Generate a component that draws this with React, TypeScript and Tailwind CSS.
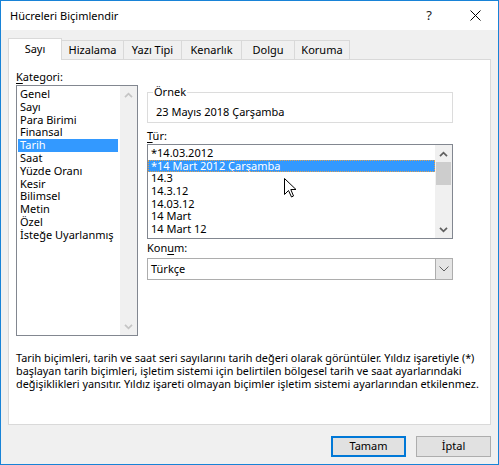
import React from 'react';

const categories = [
  'Genel',
  'Sayı',
  'Para Birimi',
  'Finansal',
  'Tarih',
  'Saat',
  'Yüzde Oranı',
  'Kesir',
  'Bilimsel',
  'Metin',
  'Özel',
  'İsteğe Uyarlanmış',
];

const dateTypes = [
  '*14.03.2012',
  '*14 Mart 2012 Çarşamba',
  '14.3',
  '14.3.12',
  '14.03.12',
  '14 Mart',
  '14 Mart 12',
];

const tabs = [
  { label: 'Sayı', width: 'w-[54px]', active: true },
  { label: 'Hizalama', width: 'w-[62px]', active: false },
  { label: 'Yazı Tipi', width: 'w-[58px]', active: false },
  { label: 'Kenarlık', width: 'w-[60px]', active: false },
  { label: 'Dolgu', width: 'w-[53px]', active: false },
  { label: 'Koruma', width: 'w-[55px]', active: false },
];

const Chevron = ({ dir, color }: { dir: 'up' | 'down'; color: string }) => (
  <svg width="9" height="6" viewBox="0 0 9 6">
    <path
      d={dir === 'up' ? 'M1 5.2 L4.5 1.6 L8 5.2' : 'M1 0.8 L4.5 4.4 L8 0.8'}
      fill="none"
      stroke={color}
      strokeWidth="1.7"
    />
  </svg>
);

const ScrollBar = ({ disabled, thumb }: { disabled?: boolean; thumb?: boolean }) => {
  const color = disabled ? '#c5c5c5' : '#606060';
  return (
    <div className="flex flex-col w-[17px] bg-[#f0f0f0]">
      <div className="h-[17px] flex items-center justify-center">
        <Chevron dir="up" color={color} />
      </div>
      <div className="flex-1">
        {thumb && <div className="mx-[1px] h-[23px] bg-[#cdcdcd]" />}
      </div>
      <div className="h-[17px] flex items-center justify-center">
        <Chevron dir="down" color={color} />
      </div>
    </div>
  );
};

const Cursor = () => (
  <svg
    className="absolute left-[282px] top-[176px]"
    width="14"
    height="22"
    viewBox="0 0 14 22"
  >
    <path
      d="M1.5 1.5 V17.5 L5.5 13.5 L8.5 20 L10.5 19 L7.8 12.5 H13 Z"
      fill="#ffffff"
      stroke="#000000"
      strokeWidth="1"
      strokeLinejoin="miter"
    />
  </svg>
);

const App = () => {
  return (
    <div className="relative w-[499px] h-[465px] flex flex-col bg-[#f0f0f0] border border-[#1883d7] text-[11px] text-black font-['Noto_Sans','Open_Sans',sans-serif] overflow-hidden">
      {/* title bar */}
      <div className="h-[29px] flex items-center bg-white">
        <span className="pl-[9px] leading-[16px] text-[11px]">Hücreleri Biçimlendir</span>
        <div className="ml-auto flex h-full">
          <div className="w-[46px] flex items-center justify-center text-[13px] text-[#222]">?</div>
          <div className="w-[46px] flex items-center justify-center">
            <svg width="11" height="11" viewBox="0 0 11 11">
              <path d="M0.5 0.5 L10.5 10.5 M10.5 0.5 L0.5 10.5" stroke="#000" strokeWidth="1" />
            </svg>
          </div>
        </div>
      </div>

      <div className="flex-1 flex flex-col px-[7px]">
        {/* tabs */}
        <div className="mt-[8px] h-[21px] flex items-end">
          {tabs.map((tab) =>
            tab.active ? (
              <div
                key={tab.label}
                className={`${tab.width} h-[22px] -mb-[1px] relative z-10 flex items-center justify-center bg-white border border-b-0 border-[#d9d9d9]`}
              >
                {tab.label}
              </div>
            ) : (
              <div
                key={tab.label}
                className={`${tab.width} h-[19px] flex items-center justify-center border-t border-r border-[#d9d9d9]`}
              >
                {tab.label}
              </div>
            )
          )}
        </div>

        {/* panel */}
        <div className="w-[483px] h-[366px] flex flex-col bg-white border border-[#d9d9d9] px-[7px] pt-[8px]">
          <div className="flex gap-[9px]">
            {/* category column */}
            <div className="w-[122px] flex flex-col">
              <div className="h-[17px] leading-[17px]">
                <span className="underline underline-offset-2">K</span>ategori:
              </div>
              <div className="h-[251px] flex border border-[#828790]">
                <div className="flex-1 pt-[2px] pl-[1px]">
                  {categories.map((c) => (
                    <div
                      key={c}
                      className={`w-[100px] h-[12.8px] leading-[12.8px] pl-[2px] whitespace-nowrap ${
                        c === 'Tarih' ? 'bg-[#3399ff] text-white' : ''
                      }`}
                    >
                      {c}
                    </div>
                  ))}
                </div>
                <ScrollBar disabled />
              </div>
            </div>

            {/* format column */}
            <div className="w-[306px] flex flex-col">
              <div className="relative mt-[24px] h-[31px] border border-[#dcdcdc]">
                <span className="absolute -top-[9px] left-[5px] px-[1px] bg-white leading-[16px]">Örnek</span>
                <div className="pl-[8px] pt-[12px] leading-[14px]">23 Mayıs 2018 Çarşamba</div>
              </div>

              <div className="mt-[5px] h-[16px] leading-[16px]">
                <span className="underline underline-offset-2">T</span>ür:
              </div>
              <div className="h-[95px] flex border border-[#828790]">
                <div className="flex-1 pt-[2px]">
                  {dateTypes.map((t, i) => (
                    <div
                      key={t}
                      className={`h-[12.7px] leading-[12.7px] pl-[3px] whitespace-nowrap ${
                        i === 1 ? 'bg-[#3399ff] text-white outline outline-1 outline-dotted outline-[#e0a050] -outline-offset-1' : ''
                      }`}
                    >
                      {t}
                    </div>
                  ))}
                </div>
                <ScrollBar thumb />
              </div>

              <div className="mt-[1px] h-[16px] leading-[16px]">
                Kon<span className="underline underline-offset-2">u</span>m:
              </div>
              <div className="mt-[2px] h-[22px] flex border border-[#adadad]">
                <div className="flex-1 flex items-center pl-[3px]">Türkçe</div>
                <div className="w-[17px] flex items-center justify-center bg-[#e5e5e5] border-l border-[#adadad]">
                  <svg width="10" height="6" viewBox="0 0 10 6">
                    <path d="M0.5 0.5 L5 5 L9.5 0.5" fill="none" stroke="#606060" strokeWidth="1" />
                  </svg>
                </div>
              </div>
            </div>
          </div>

          <div className="mt-[15px] text-[10.85px] leading-[13px] whitespace-nowrap">
            <div>Tarih biçimleri, tarih ve saat seri sayılarını tarih değeri olarak görüntüler. Yıldız işaretiyle (*)</div>
            <div>başlayan tarih biçimleri, işletim sistemi için belirtilen bölgesel tarih ve saat ayarlarındaki</div>
            <div>değişiklikleri yansıtır. Yıldız işareti olmayan biçimler işletim sistemi ayarlarından etkilenmez.</div>
          </div>
        </div>

        {/* buttons */}
        <div className="mt-[11px] w-[483px] flex justify-end gap-[10px]">
          <button className="w-[75px] h-[21px] flex items-center justify-center bg-[#e1e1e1] border-2 border-[#0078d7]">
            Tamam
          </button>
          <button className="w-[75px] h-[21px] flex items-center justify-center bg-[#e1e1e1] border border-[#adadad]">
            İptal
          </button>
        </div>
      </div>

      <Cursor />
    </div>
  );
};

export default App;
